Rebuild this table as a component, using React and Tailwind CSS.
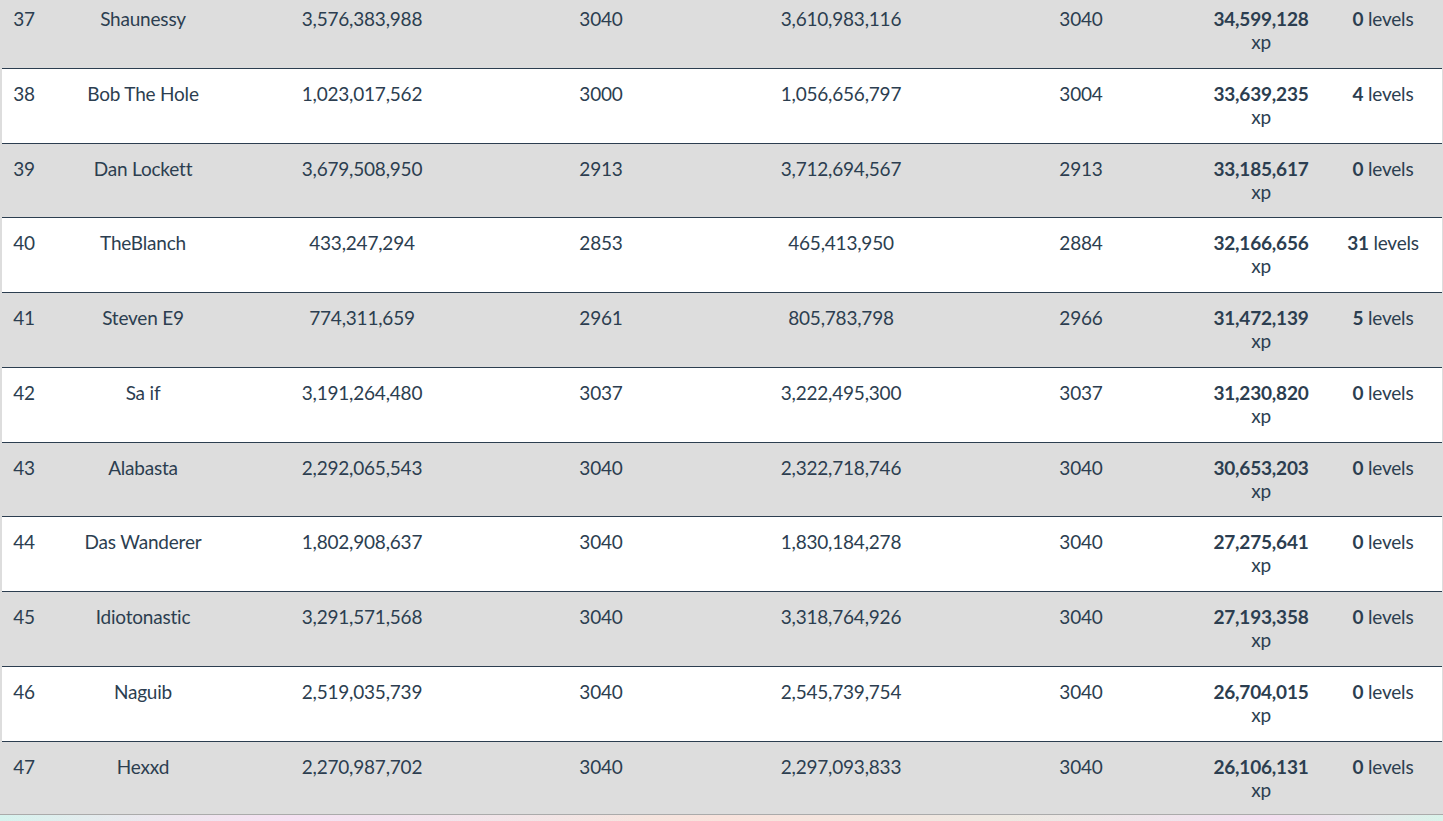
import React from "react";

const rows = [
    { rank: 37, name: "Shaunessy", xpStart: "3,576,383,988", lvlStart: "3040", xpEnd: "3,610,983,116", lvlEnd: "3040", gained: "34,599,128", levels: 0 },
    { rank: 38, name: "Bob The Hole", xpStart: "1,023,017,562", lvlStart: "3000", xpEnd: "1,056,656,797", lvlEnd: "3004", gained: "33,639,235", levels: 4 },
    { rank: 39, name: "Dan Lockett", xpStart: "3,679,508,950", lvlStart: "2913", xpEnd: "3,712,694,567", lvlEnd: "2913", gained: "33,185,617", levels: 0 },
    { rank: 40, name: "TheBlanch", xpStart: "433,247,294", lvlStart: "2853", xpEnd: "465,413,950", lvlEnd: "2884", gained: "32,166,656", levels: 31 },
    { rank: 41, name: "Steven E9", xpStart: "774,311,659", lvlStart: "2961", xpEnd: "805,783,798", lvlEnd: "2966", gained: "31,472,139", levels: 5 },
    { rank: 42, name: "Sa if", xpStart: "3,191,264,480", lvlStart: "3037", xpEnd: "3,222,495,300", lvlEnd: "3037", gained: "31,230,820", levels: 0 },
    { rank: 43, name: "Alabasta", xpStart: "2,292,065,543", lvlStart: "3040", xpEnd: "2,322,718,746", lvlEnd: "3040", gained: "30,653,203", levels: 0 },
    { rank: 44, name: "Das Wanderer", xpStart: "1,802,908,637", lvlStart: "3040", xpEnd: "1,830,184,278", lvlEnd: "3040", gained: "27,275,641", levels: 0 },
    { rank: 45, name: "Idiotonastic", xpStart: "3,291,571,568", lvlStart: "3040", xpEnd: "3,318,764,926", lvlEnd: "3040", gained: "27,193,358", levels: 0 },
    { rank: 46, name: "Naguib", xpStart: "2,519,035,739", lvlStart: "3040", xpEnd: "2,545,739,754", lvlEnd: "3040", gained: "26,704,015", levels: 0 },
    { rank: 47, name: "Hexxd", xpStart: "2,270,987,702", lvlStart: "3040", xpEnd: "2,297,093,833", lvlEnd: "3040", gained: "26,106,131", levels: 0 },
];

const Leaderboard = () => {
    return (
        <div className="min-h-screen w-full bg-[#dddddd] overflow-hidden font-['Lato','Liberation_Sans',sans-serif] text-[19px] leading-[23px] text-[#2c3e50] tracking-[-0.2px]">
            <div className="h-[815px] overflow-hidden border-b border-[#aaaaaa]">
                <div className="-mt-[7px] ml-[2px] mr-[1px] border-t border-[#2c3e50]">
                    {rows.map((r, i) => (
                        <div
                            key={r.rank}
                            className={`grid grid-cols-[44px_194px_244px_234px_246px_234px_126px_118px] h-[74.75px] pt-[13px] border-b border-[#2c3e50] text-center ${i % 2 === 0 ? "bg-[#dddddd]" : "bg-white"}`}
                        >
                            <div>{r.rank}</div>
                            <div>{r.name}</div>
                            <div>{r.xpStart}</div>
                            <div>{r.lvlStart}</div>
                            <div>{r.xpEnd}</div>
                            <div>{r.lvlEnd}</div>
                            <div>
                                <span className="block font-bold">{r.gained}</span>
                                <span className="block">xp</span>
                            </div>
                            <div>
                                <span className="font-bold">{r.levels}</span> levels
                            </div>
                        </div>
                    ))}
                </div>
            </div>
            <div className="h-[6px] bg-gradient-to-r from-[#d6f3ee] via-[#f9e2dc] to-[#d9f3ea]">
                <div className="h-full w-full bg-[linear-gradient(90deg,transparent_0%,#f6e0f2_20%,transparent_45%,transparent_70%,#f5def0_88%,transparent_100%)]"></div>
            </div>
        </div>
    );
};

export default function App() {
    return <Leaderboard />;
}
